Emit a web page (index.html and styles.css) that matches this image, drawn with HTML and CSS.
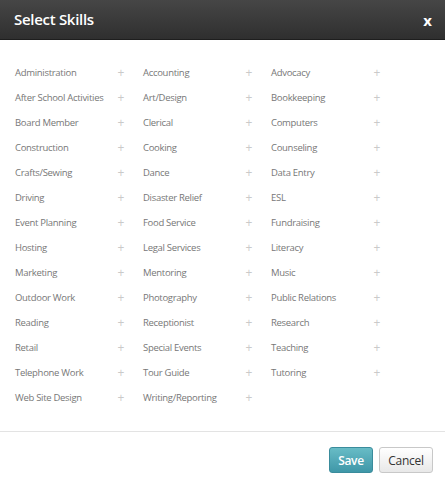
FILE: index.html
```html
<!DOCTYPE html>
<html>
<head>
<meta charset="UTF-8"/>
<title>Select Skills</title>
<link rel="stylesheet" href="styles.css">
</head>
<body>
<div class="modal">
	<div class="modal-header">
		<h3>Select Skills</h3>
		<span class="close">x</span>
	</div>
	<div class="modal-body">
		<ul class="skills">
			<li><span>Administration</span><i>+</i></li>
			<li><span>Accounting</span><i>+</i></li>
			<li><span>Advocacy</span><i>+</i></li>
			<li><span>After School Activities</span><i>+</i></li>
			<li><span>Art/Design</span><i>+</i></li>
			<li><span>Bookkeeping</span><i>+</i></li>
			<li><span>Board Member</span><i>+</i></li>
			<li><span>Clerical</span><i>+</i></li>
			<li><span>Computers</span><i>+</i></li>
			<li><span>Construction</span><i>+</i></li>
			<li><span>Cooking</span><i>+</i></li>
			<li><span>Counseling</span><i>+</i></li>
			<li><span>Crafts/Sewing</span><i>+</i></li>
			<li><span>Dance</span><i>+</i></li>
			<li><span>Data Entry</span><i>+</i></li>
			<li><span>Driving</span><i>+</i></li>
			<li><span>Disaster Relief</span><i>+</i></li>
			<li><span>ESL</span><i>+</i></li>
			<li><span>Event Planning</span><i>+</i></li>
			<li><span>Food Service</span><i>+</i></li>
			<li><span>Fundraising</span><i>+</i></li>
			<li><span>Hosting</span><i>+</i></li>
			<li><span>Legal Services</span><i>+</i></li>
			<li><span>Literacy</span><i>+</i></li>
			<li><span>Marketing</span><i>+</i></li>
			<li><span>Mentoring</span><i>+</i></li>
			<li><span>Music</span><i>+</i></li>
			<li><span>Outdoor Work</span><i>+</i></li>
			<li><span>Photography</span><i>+</i></li>
			<li><span>Public Relations</span><i>+</i></li>
			<li><span>Reading</span><i>+</i></li>
			<li><span>Receptionist</span><i>+</i></li>
			<li><span>Research</span><i>+</i></li>
			<li><span>Retail</span><i>+</i></li>
			<li><span>Special Events</span><i>+</i></li>
			<li><span>Teaching</span><i>+</i></li>
			<li><span>Telephone Work</span><i>+</i></li>
			<li><span>Tour Guide</span><i>+</i></li>
			<li><span>Tutoring</span><i>+</i></li>
			<li><span>Web Site Design</span><i>+</i></li>
			<li><span>Writing/Reporting</span><i>+</i></li>
		</ul>
	</div>
	<div class="modal-footer">
		<button class="btn btn-save">Save</button>
		<button class="btn btn-cancel">Cancel</button>
	</div>
</div>
</body>
</html>
```
FILE: styles.css
```css
body {
	margin: 0;
	background: #fff;
	font-family: "Open Sans", "Liberation Sans", sans-serif;
}
.modal {
	width: 445px;
	height: 486px;
	display: flex;
	flex-direction: column;
}
.modal-header {
	height: 39px;
	padding: 0 14px;
	display: flex;
	align-items: center;
	justify-content: space-between;
	background: linear-gradient(#464646, #2f2f2f);
	border-bottom: 1px solid #1e1e1e;
}
.modal-header h3 {
	margin: 0 0 1px;
	color: #fff;
	font-size: 15px;
	font-weight: 600;
	letter-spacing: -0.3px;
}
.close {
	color: #fff;
	font-size: 15px;
	font-weight: bold;
	margin-right: -1px;
}
.modal-body {
	padding: 20px 15px 21px;
	border-bottom: 1px solid #e3e3e3;
}
.skills {
	list-style: none;
	margin: 0;
	padding: 0;
	display: grid;
	grid-template-columns: 128px 128px 128px;
	grid-auto-rows: 25px;
}
.skills li {
	display: flex;
	align-items: center;
	justify-content: space-between;
	padding-right: 19px;
	font-size: 9.5px;
	letter-spacing: -0.3px;
	color: #777;
}
.skills i {
	font-style: normal;
	font-size: 12px;
	color: #cacaca;
}
.modal-footer {
	padding: 15px 12px 0;
	display: flex;
	justify-content: flex-end;
	gap: 6px;
}
.btn {
	height: 26px;
	padding: 0 6px;
	border-radius: 3px;
	font-family: "Open Sans", "Liberation Sans", sans-serif;
	font-size: 12px;
	letter-spacing: -0.3px;
}
.btn-save {
	width: 44px;
	color: #fff;
	font-weight: 600;
	background: linear-gradient(#68bcc6, #3f97a8);
	border: 1px solid #3a8c9c;
}
.btn-cancel {
	width: 54px;
	color: #333;
	background: linear-gradient(#fff, #e8e8e8);
	border: 1px solid #c8c8c8;
}
```
